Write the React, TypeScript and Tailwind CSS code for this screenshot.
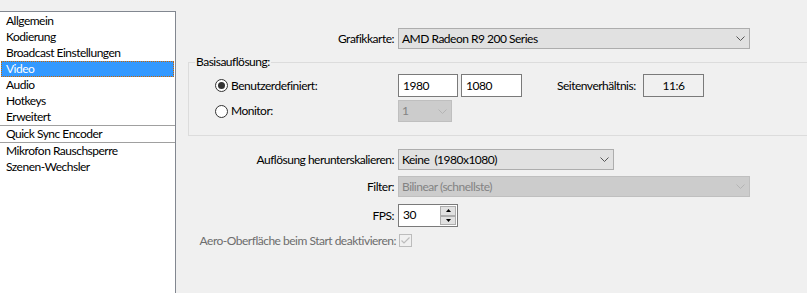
import React from "react";

const font = { fontFamily: 'Lato, "Noto Sans", sans-serif' };

function Chevron({ color }: { color: string }) {
  return (
    <svg width="9" height="5" viewBox="0 0 9 5" className="block">
      <polyline points="0.5,0.5 4.5,4.5 8.5,0.5" fill="none" stroke={color} strokeWidth="1" />
    </svg>
  );
}

function Combo({ text, width, disabled }: { text: string; width: string; disabled?: boolean }) {
  return (
    <div
      className={
        "flex h-full items-center border box-border " +
        width +
        (disabled ? " bg-[#cccccc] border-[#bfbfbf] text-[#838383]" : " bg-[#e1e1e1] border-[#adadad] text-black")
      }
    >
      <span className="flex-1 pl-[3px] whitespace-pre">{text}</span>
      <span className="flex w-[18px] justify-center">
        <Chevron color={disabled ? "#b4b4b4" : "#555555"} />
      </span>
    </div>
  );
}

function Radio({ checked }: { checked?: boolean }) {
  return (
    <span className="flex h-[13px] w-[13px] items-center justify-center rounded-full border border-[#333333] bg-white box-border">
      {checked && <span className="h-[7px] w-[7px] rounded-full bg-[#333333]" />}
    </span>
  );
}

const items = [
  "Allgemein",
  "Kodierung",
  "Broadcast Einstellungen",
  "Video",
  "Audio",
  "Hotkeys",
  "Erweitert",
  "Quick Sync Encoder",
  "Mikrofon Rauschsperre",
  "Szenen-Wechsler",
];

export default function App() {
  return (
    <div className="flex h-[293px] w-[807px] overflow-hidden bg-[#f0f0f0] text-[12px] leading-[16px] tracking-[-0.5px] text-black" style={font}>
      {/* left list */}
      <div className="mt-[11px] flex h-[282px] w-[176px] shrink-0 flex-col border-t border-r border-[#828790] bg-white pt-[1px] box-border">
        {items.map((it, i) => {
          const sel = it === "Video";
          const sepAfter = it === "Erweitert" || it === "Quick Sync Encoder";
          return (
            <div key={i} className={sepAfter ? "border-b border-[#a0a0a0]" : ""}>
              <div
                className={
                  "mx-[1px] h-[16px] pl-[5px] whitespace-nowrap " +
                  (sel ? "bg-[#3399ff] text-white outline outline-1 outline-dotted outline-[#cc6600] -outline-offset-1" : "")
                }
              >
                {it}
              </div>
            </div>
          );
        })}
      </div>

      {/* right panel */}
      <div className="flex flex-1 flex-col">
        {/* Grafikkarte */}
        <div className="mt-[28px] flex h-[21px] items-center">
          <span className="w-[218px] text-right">Grafikkarte:</span>
          <div className="ml-[4px] h-full">
            <Combo text="AMD Radeon R9 200 Series" width="w-[352px]" />
          </div>
        </div>

        {/* group */}
        <fieldset className="ml-[12px] mt-[5px] w-[640px] border border-[#dcdcdc] pb-[13px]">
          <legend className="ml-[6px] px-[1px] leading-[16px]">Basisauflösung:</legend>
          <div className="mt-[4px] flex h-[23px] items-center">
            <div className="flex w-[209px] items-center pl-[26px]">
              <Radio checked />
              <span className="ml-[3px]">Benutzerdefiniert:</span>
            </div>
            <div className="flex h-full w-[60px] items-center border border-[#7a7a7a] bg-white pl-[4px] box-border">1980</div>
            <div className="ml-[3px] flex h-full w-[61px] items-center border border-[#7a7a7a] bg-white pl-[4px] box-border">1080</div>
            <div className="flex w-[121px] items-center pl-[35px]">Seitenverhältnis:</div>
            <div className="flex h-full w-[61px] items-center justify-center border border-[#7a7a7a] bg-[#f0f0f0] box-border">11:6</div>
          </div>
          <div className="mt-[3px] flex h-[22px] items-center">
            <div className="flex w-[209px] items-center pl-[26px]">
              <Radio />
              <span className="ml-[3px]">Monitor:</span>
            </div>
            <div className="h-full">
              <Combo text="1" width="w-[54px]" disabled />
            </div>
          </div>
        </fieldset>

        {/* Auflösung */}
        <div className="mt-[13px] flex h-[21px] items-center">
          <span className="w-[218px] text-right">Auflösung herunterskalieren:</span>
          <div className="ml-[4px] h-full">
            <Combo text="Keine  (1980x1080)" width="w-[216px]" />
          </div>
        </div>

        {/* Filter */}
        <div className="mt-[6px] flex h-[21px] items-center">
          <span className="w-[218px] text-right">Filter:</span>
          <div className="ml-[4px] h-full">
            <Combo text="Bilinear (schnellste)" width="w-[352px]" disabled />
          </div>
        </div>

        {/* FPS */}
        <div className="mt-[7px] flex h-[23px] items-center">
          <span className="w-[218px] text-right">FPS:</span>
          <div className="ml-[4px] flex h-full w-[60px] border border-[#7a7a7a] bg-white box-border">
            <span className="flex-1 pl-[4px] leading-[19px]">30</span>
            <div className="flex w-[17px] flex-col py-[1px] pr-[1px]">
              <div className="flex h-[10px] items-center justify-center border border-[#adadad] bg-[#e1e1e1] box-border">
                <svg width="5" height="3" viewBox="0 0 5 3"><polygon points="2.5,0 5,3 0,3" fill="#000" /></svg>
              </div>
              <div className="flex h-[10px] items-center justify-center border border-[#adadad] bg-[#e1e1e1] box-border">
                <svg width="5" height="3" viewBox="0 0 5 3"><polygon points="0,0 5,0 2.5,3" fill="#000" /></svg>
              </div>
            </div>
          </div>
        </div>

        {/* Aero */}
        <div className="mt-[7px] flex h-[13px] items-center">
          <span className="w-[220px] whitespace-nowrap text-right text-[#6d6d6d]">Aero-Oberfläche beim Start deaktivieren:</span>
          <div className="ml-[3px] flex h-[13px] w-[13px] items-center justify-center border border-[#bcbcbc] bg-[#f0f0f0] box-border">
            <svg width="9" height="7" viewBox="0 0 9 7">
              <polyline points="0.5,3.5 3,6 8.5,0.5" fill="none" stroke="#bcbcbc" strokeWidth="1.2" />
            </svg>
          </div>
        </div>
      </div>
    </div>
  );
}
